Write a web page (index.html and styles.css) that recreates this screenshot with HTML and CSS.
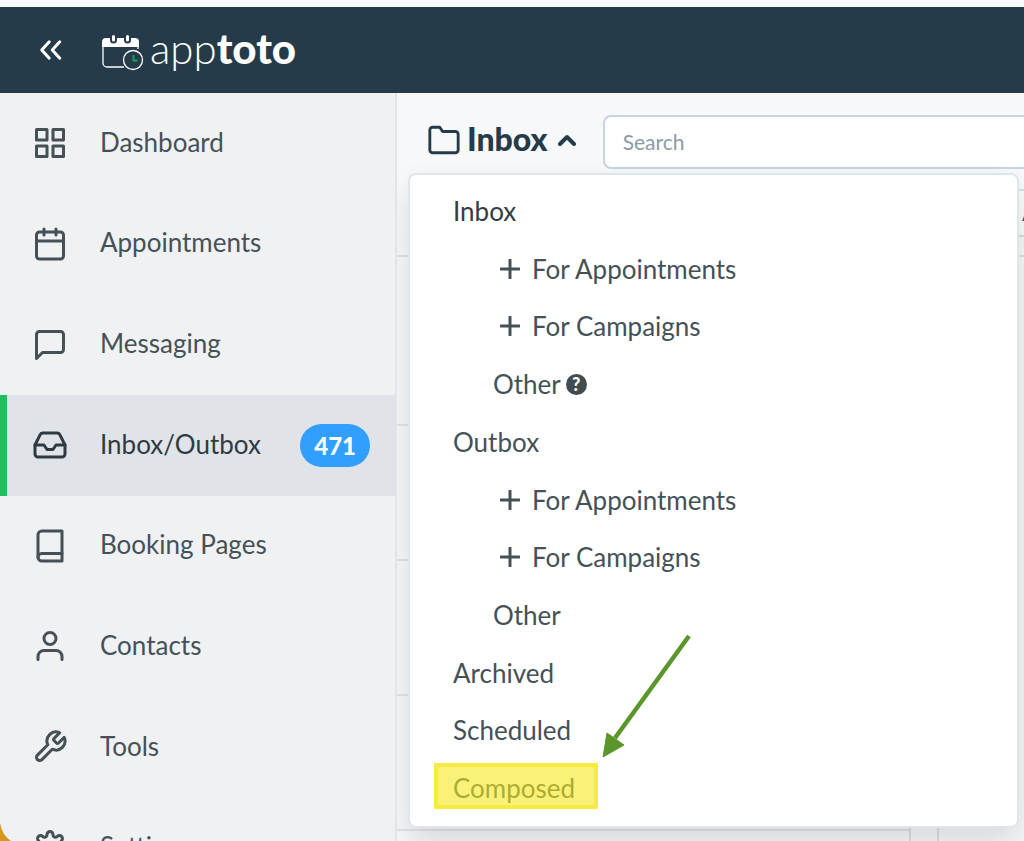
FILE: index.html
```html
<!DOCTYPE html>
<html lang="en">
<head>
    <meta charset="UTF-8">
    <meta name="viewport" content="width=device-width, initial-scale=1.0">
    <title>Apptoto - Inbox</title>
    <link rel="stylesheet" href="styles.css">
</head>
<body>
    <header class="topbar">
        <button class="collapse-btn" aria-label="Collapse menu">
            <svg width="36" height="36" viewBox="0 0 24 24"><path d="M11.5 17.5l-5-5.5 5-5.5M18.500 17.500l-5-5.500 5-5.500"/></svg>
        </button>
        <a class="logo" href="#">
            <svg width="42" height="42" viewBox="0 -6 42 42">
                <path d="M1 11V28a4 4 0 0 0 4 4H22M36 11V14" fill="none" stroke="#fff" stroke-width="1.300"/>
                <path d="M0 12V7a4 4 0 0 1 4-4H8V5a3.500 3.500 0 0 0 7 0V3H22V5a3.500 3.500 0 0 0 7 0V3H33a4 4 0 0 1 4 4V12z" fill="#fff"/>
                <path d="M11.500 1.500V5M25.500 1.500V5" stroke="#fff" stroke-width="3" stroke-linecap="round"/>
                <circle cx="31" cy="25" r="9.500" fill="#263b49" stroke="#fff" stroke-width="1.300"/>
                <path d="M31.500 20V25.500H35.500" fill="none" stroke="#16a05a" stroke-width="2"/>
            </svg>
            <span class="logo-text">app<b>toto</b></span>
        </a>
    </header>

    <div class="layout">
        <nav class="sidebar">
            <div class="nav-list">
                <a class="nav-item" href="#">
                    <svg class="icon" viewBox="0 0 24 24"><rect x="3" y="3" width="7" height="7"/><rect x="14" y="3" width="7" height="7"/><rect x="14" y="14" width="7" height="7"/><rect x="3" y="14" width="7" height="7"/></svg>
                    <span class="label">Dashboard</span>
                </a>
                <a class="nav-item" href="#">
                    <svg class="icon" viewBox="0 0 24 24"><rect x="3" y="4" width="18" height="18" rx="2"/><path d="M16 2v4M8 2v4M3 10h18"/></svg>
                    <span class="label">Appointments</span>
                </a>
                <a class="nav-item" href="#">
                    <svg class="icon" viewBox="0 0 24 24"><path d="M21 15a2 2 0 0 1-2 2H7l-4 4V5a2 2 0 0 1 2-2h14a2 2 0 0 1 2 2z"/></svg>
                    <span class="label">Messaging</span>
                </a>
                <a class="nav-item active" href="#">
                    <svg class="icon" viewBox="0 0 24 24"><path d="M22 12h-6l-2 3h-4l-2-3H2"/><path d="M5.450 5.110L2 12v6a2 2 0 0 0 2 2h16a2 2 0 0 0 2-2v-6l-3.450-6.890A2 2 0 0 0 16.760 4H7.240a2 2 0 0 0-1.790 1.110z"/></svg>
                    <span class="label">Inbox/Outbox</span>
                    <span class="badge">471</span>
                </a>
                <a class="nav-item" href="#">
                    <svg class="icon" viewBox="0 0 24 24"><path d="M4 19.500A2.500 2.500 0 0 1 6.500 17H20"/><path d="M6.500 2H20v20H6.500A2.500 2.500 0 0 1 4 19.500v-15A2.500 2.500 0 0 1 6.500 2z"/></svg>
                    <span class="label">Booking Pages</span>
                </a>
                <a class="nav-item" href="#">
                    <svg class="icon" viewBox="0 0 24 24"><path d="M20 21v-2a4 4 0 0 0-4-4H8a4 4 0 0 0-4 4v2"/><circle cx="12" cy="7" r="4"/></svg>
                    <span class="label">Contacts</span>
                </a>
                <a class="nav-item" href="#">
                    <svg class="icon" viewBox="0 0 24 24"><path d="M14.700 6.300a1 1 0 0 0 0 1.400l1.600 1.600a1 1 0 0 0 1.400 0l3.770-3.770a6 6 0 0 1-7.940 7.940l-6.910 6.910a2.120 2.120 0 0 1-3-3l6.910-6.910a6 6 0 0 1 7.940-7.940l-3.760 3.760z"/></svg>
                    <span class="label">Tools</span>
                </a>
                <a class="nav-item" href="#">
                    <svg class="icon" viewBox="0 0 24 24"><circle cx="12" cy="12" r="3"/><path d="M19.400 15a1.650 1.650 0 0 0 .33 1.820l.06.06a2 2 0 1 1-2.830 2.830l-.06-.06a1.650 1.650 0 0 0-2.900 1.180V21a2 2 0 0 1-4 0v-.09a1.650 1.650 0 0 0-2.900-1.260l-.06.06a2 2 0 1 1-2.830-2.830l.06-.06A1.650 1.650 0 0 0 3.090 14H3a2 2 0 0 1 0-4h.09a1.650 1.650 0 0 0 1.260-2.820l-.06-.06a2 2 0 1 1 2.830-2.830l.06.06A1.650 1.650 0 0 0 10 3.090V3a2 2 0 0 1 4 0v.09a1.650 1.650 0 0 0 2.820 1.260l.06-.06a2 2 0 1 1 2.830 2.830l-.06.06A1.650 1.650 0 0 0 20.910 10H21a2 2 0 0 1 0 4h-.09a1.650 1.650 0 0 0-1.510 1z"/></svg>
                    <span class="label">Settings</span>
                </a>
            </div>
        </nav>

        <main class="content">
            <div class="content-head">
                <button class="folder-btn" aria-expanded="true">
                    <svg class="folder-icon" viewBox="0 0 24 24"><path d="M22 19a2 2 0 0 1-2 2H4a2 2 0 0 1-2-2V5a2 2 0 0 1 2-2h5l2 3h9a2 2 0 0 1 2 2z"/></svg>
                    <span class="folder-title">Inbox</span>
                    <svg class="caret" width="18" height="12" viewBox="0 0 18 12"><path d="M2 10l7-7 7 7"/></svg>
                </button>
                <input class="search" type="text" placeholder="Search" aria-label="Search">
            </div>
            <div class="filter-bar"><span class="filter-label">A</span></div>
            <div class="panes">
                <div class="message-list">
                    <div class="list-head"></div>
                    <div class="message"></div>
                    <div class="message"></div>
                    <div class="message"></div>
                    <div class="message"></div>
                </div>
                <div class="message-view"></div>
            </div>

            <div class="folder-menu">
                <a class="folder strong" href="#">Inbox</a>
                <a class="folder sub" href="#"><svg class="plus" viewBox="0 0 20 20"><path d="M10 1v18M1 10h18"/></svg>For Appointments</a>
                <a class="folder sub" href="#"><svg class="plus" viewBox="0 0 20 20"><path d="M10 1v18M1 10h18"/></svg>For Campaigns</a>
                <a class="folder other" href="#">Other <span class="help">?</span></a>
                <a class="folder" href="#">Outbox</a>
                <a class="folder sub" href="#"><svg class="plus" viewBox="0 0 20 20"><path d="M10 1v18M1 10h18"/></svg>For Appointments</a>
                <a class="folder sub" href="#"><svg class="plus" viewBox="0 0 20 20"><path d="M10 1v18M1 10h18"/></svg>For Campaigns</a>
                <a class="folder other" href="#">Other</a>
                <a class="folder" href="#">Archived</a>
                <a class="folder" href="#">Scheduled</a>
                <a class="folder composed" href="#">Composed
                    <svg class="arrow" width="90" height="124" viewBox="0 0 90 124"><path d="M87 2L13 104" stroke="#5b962b" stroke-width="4.500"/><path d="M1 123L5 99 22 111z" fill="#5b962b" stroke="#5b962b"/></svg>
                </a>
            </div>
        </main>
    </div>
    <svg class="window-corner" width="11" height="18" viewBox="0 0 11 18"><path d="M0 0Q2 12 11 18H0z" fill="#d7961f"/></svg>
</body>
</html>
```

FILE: styles.css
```css
*,
*::after {
    box-sizing: border-box;
}
body {
    margin: 0;
    padding-top: 7px;
    height: 100vh;
    overflow: hidden;
    display: flex;
    flex-direction: column;
    position: relative;
    background: #fafafa;
    color: #455157;
    font-family: Lato, "Liberation Sans", sans-serif;
    font-size: 26px;
}
a {
    color: inherit;
    text-decoration: none;
}
button {
    border: none;
    background: none;
    padding: 0;
    font: inherit;
    color: inherit;
    cursor: pointer;
}
svg {
    display: block;
    flex-shrink: 0;
}

/* top bar */
.topbar {
    height: 86px;
    flex-shrink: 0;
    display: flex;
    align-items: center;
    gap: 34px;
    padding-left: 32px;
    background: #263b49;
    color: #fff;
}
.collapse-btn path {
    fill: none;
    stroke: #fff;
    stroke-width: 2;
    stroke-linecap: round;
    stroke-linejoin: round;
}
.logo {
    display: flex;
    align-items: center;
    gap: 6px;
}
.logo-text {
    padding-bottom: 4px;
    font-size: 42px;
    font-weight: 300;
    line-height: 48px;
}
.logo-text b {
    font-weight: 900;
}

.layout {
    flex: 1;
    min-height: 0;
    display: flex;
}

/* sidebar */
.sidebar {
    width: 397px;
    flex-shrink: 0;
    overflow: hidden;
    background: #eff1f3;
    border-right: 2px solid #e1e5e9;
}
.nav-list {
    height: 805px;
    display: flex;
    flex-direction: column;
}
.nav-item {
    flex: 1;
    display: flex;
    align-items: center;
    padding: 0 25px 0 32px;
}
.nav-item.active {
    background: #e0e4e9;
    border-left: 7px solid #1fc15f;
    padding-left: 25px;
    color: #2f3b43;
}
.label {
    padding: 0 0 3px 32px;
}
.icon {
    width: 36px;
    height: 36px;
}
.icon,
.folder-icon,
.caret,
.plus {
    fill: none;
    stroke: currentColor;
    stroke-width: 2;
    stroke-linecap: round;
    stroke-linejoin: round;
}
.badge {
    margin-left: auto;
    padding: 0 14px;
    border-radius: 22px;
    background: #309fff;
    color: #fff;
    font-size: 24px;
    font-weight: 900;
    line-height: 43px;
}

/* content */
.content {
    flex: 1;
    min-width: 0;
    position: relative;
    overflow: hidden;
    display: flex;
    flex-direction: column;
    background: #f6f8fa;
}
.content-head {
    display: flex;
    align-items: center;
    gap: 27px;
    padding: 22px 0 20px 30px;
}
.folder-btn {
    display: flex;
    align-items: center;
    gap: 6px;
    padding-bottom: 4px;
    color: #263b49;
    font-size: 32px;
    font-weight: 900;
    line-height: 40px;
}
.folder-title {
    padding-bottom: 3px;
}
.folder-icon {
    width: 34px;
    height: 34px;
}
.caret {
    margin-left: 4px;
    stroke-width: 4;
}
.search {
    flex: 1;
    min-width: 0;
    height: 54px;
    margin-right: -20px;
    padding: 0 18px 2px;
    border: 2px solid #c8d4e3;
    border-radius: 8px;
    background: #fff;
    font: inherit;
    font-size: 21px;
}
.search::placeholder {
    color: #8a9ba8;
    opacity: 1;
}
.filter-bar {
    height: 48px;
    margin-left: 200px;
    overflow: hidden;
    border: solid #d5dce8;
    border-width: 2px 0;
    background: #fafbfc;
    display: flex;
    justify-content: flex-end;
}
.filter-label {
    width: 2px;
    font-size: 20px;
    line-height: 44px;
}
.panes {
    flex: 1;
    margin-top: 18px;
    display: flex;
    gap: 26px;
}
.message-list {
    flex: 0 0 514px;
    border-top: 2px solid #e1e4e8;
    border-right: 2px solid #dde1e5;
}
.list-head {
    height: 34px;
}
.message {
    height: 135px;
    border-bottom: 2px solid #e1e4e8;
}
.message-view {
    flex: 1;
    border: solid #dde1e5;
    border-width: 2px 0 0 2px;
}

/* folder menu */
.folder-menu {
    position: absolute;
    top: 80px;
    left: 11px;
    width: 611px;
    height: 655px;
    padding: 7px 0 9px;
    display: flex;
    flex-direction: column;
    border: 2px solid #dfe5ec;
    border-radius: 8px;
    background: #fff;
    box-shadow: 0 16px 32px rgba(0, 0, 0, 0.12);
}
.folder {
    flex: 1;
    display: flex;
    align-items: center;
    padding-left: 43px;
}
.folder.strong {
    color: #333d42;
}
.folder.other {
    gap: 5px;
    padding-left: 83px;
}
.folder.sub {
    gap: 12px;
    padding-left: 90px;
}
.plus {
    width: 20px;
    height: 20px;
    stroke-width: 3;
}
.help {
    width: 21px;
    border-radius: 50%;
    background: #414b50;
    color: #fff;
    font-size: 18px;
    font-weight: 900;
    line-height: 21px;
    text-align: center;
}

/* marker over the Composed folder */
.composed {
    position: relative;
}
.composed::after {
    content: "";
    position: absolute;
    left: 24px;
    top: 4px;
    width: 164px;
    height: 46px;
    border: 4px solid #f5ec3f;
    background: rgba(245, 232, 30, 0.6);
}
.arrow {
    position: absolute;
    left: 192px;
    bottom: 59px;
}

.window-corner {
    position: absolute;
    left: 0;
    bottom: 0;
}
```
